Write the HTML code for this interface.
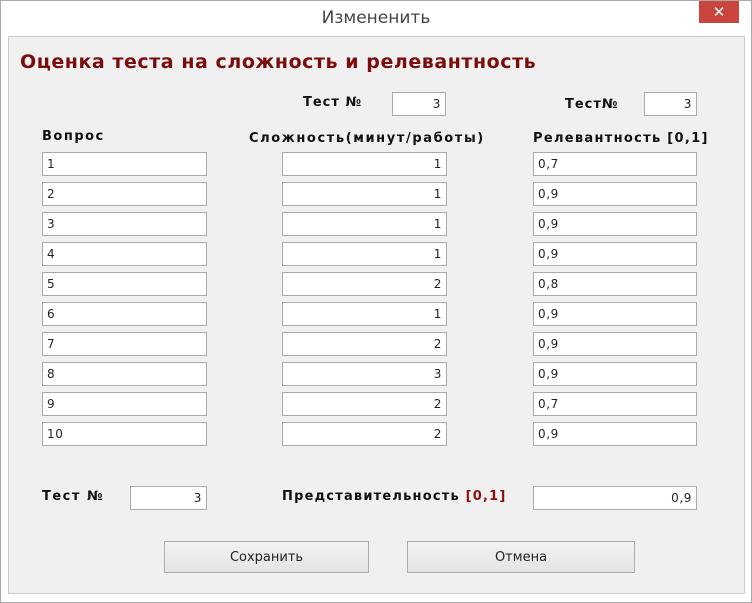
<!DOCTYPE html><html><head><meta charset="utf-8"><style>
body{margin:0;width:752px;height:603px;background:#fff;position:relative;overflow:hidden;font-family:"DejaVu Sans","Liberation Sans",sans-serif;}
.frame{position:absolute;left:0;top:0;width:750px;height:601px;border:1px solid #aaa;background:#fff}
.panel{position:absolute;left:8px;top:36px;width:735px;height:556px;background:#f0f0f0;border:1px solid #ccc}
.t{position:absolute;font-size:13px;font-weight:bold;color:#111;letter-spacing:1.5px;white-space:nowrap}
.b{position:absolute;background:#fff;border:1px solid #aaa;font-size:12px;line-height:22px;box-sizing:border-box;height:24px;padding:0 4px;color:#222;letter-spacing:0.6px}
.r{text-align:right}
.btn{position:absolute;height:32px;background:linear-gradient(#f2f2f2,#e4e4e4);border:1px solid #adadad;font-size:13px;text-align:center;line-height:32px;box-sizing:border-box;color:#222}
</style></head><body>
<div class="frame"></div>
<div style="position:absolute;left:0;top:8px;width:752px;text-align:center;font-size:17px;color:#444">Измененить</div>
<div style="position:absolute;left:699px;top:1px;width:40px;height:22px;background:#c9453d;color:#fff;text-align:center;font-size:15px;line-height:22px">✕</div>
<div class="panel"></div>
<div style="position:absolute;left:20px;top:51px;font-size:19px;font-weight:bold;color:#7a0c0c;letter-spacing:0.55px;white-space:nowrap">Оценка теста на сложность и релевантность</div>
<div class="t" style="left:303px;top:95px;letter-spacing:1px">Тест №</div>
<div class="b r" style="left:392px;top:92px;width:54px">3</div>
<div class="t" style="left:565px;top:97px;letter-spacing:1px">Тест№</div>
<div class="b r" style="left:644px;top:92px;width:53px">3</div>
<div class="t" style="left:42px;top:129px">Вопрос</div>
<div class="t" style="left:249px;top:131px;letter-spacing:1.6px">Сложность(минут/работы)</div>
<div class="t" style="left:533px;top:131px;letter-spacing:1.3px">Релевантность [0,1]</div>
<div id="rows"></div>
<div class="t" style="left:42px;top:489px">Тест №</div>
<div class="b r" style="left:130px;top:486px;width:77px">3</div>
<div class="t" style="left:282px;top:489px;letter-spacing:1.2px">Представительность <span style="color:#8b1010">[0,1]</span></div>
<div class="b r" style="left:533px;top:486px;width:164px">0,9</div>
<div class="btn" style="left:164px;top:541px;width:205px">Сохранить</div>
<div class="btn" style="left:407px;top:541px;width:228px">Отмена</div>
<script>
var c=[1,1,1,1,2,1,2,3,2,2],r=["0,7","0,9","0,9","0,9","0,8","0,9","0,9","0,9","0,7","0,9"],h="";
for(var i=0;i<10;i++){var y=152+i*30;
h+='<div class="b" style="left:42px;top:'+y+'px;width:165px">'+(i+1)+'</div>';
h+='<div class="b r" style="left:282px;top:'+y+'px;width:165px">'+c[i]+'</div>';
h+='<div class="b" style="left:533px;top:'+y+'px;width:164px">'+r[i]+'</div>';}
document.getElementById('rows').innerHTML=h;
</script>
</body></html>
